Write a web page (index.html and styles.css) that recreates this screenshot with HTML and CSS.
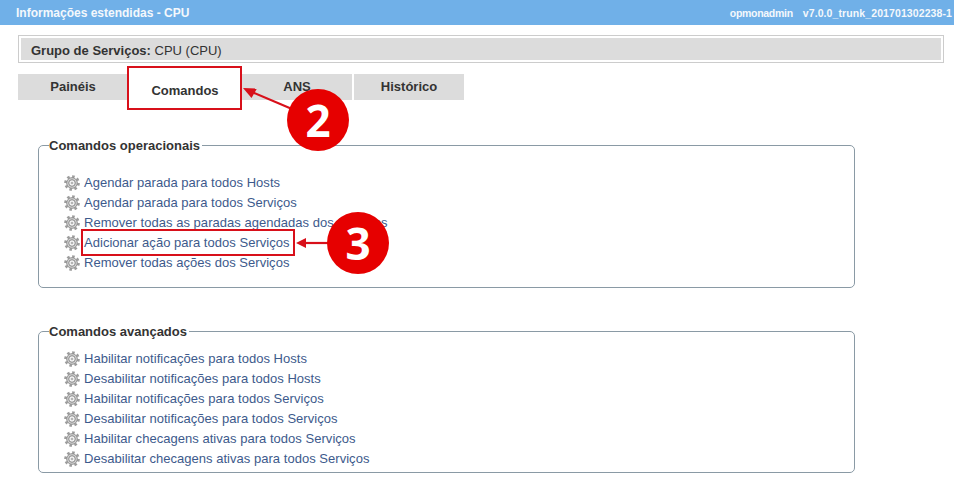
FILE: index.html
```html
<!DOCTYPE html>
<html lang="pt">
<head>
<meta charset="utf-8">
<title>Informações estendidas - CPU</title>
<link rel="stylesheet" href="styles.css">
</head>
<body>
<svg class="defs" width="0" height="0" aria-hidden="true">
  <symbol id="gear" viewBox="0 0 18 18">
    <circle cx="9" cy="9" r="7.4" fill="none" stroke="#9c9c9c" stroke-width="2.8" stroke-dasharray="2.9 2.9"/>
    <circle cx="9" cy="9" r="6" fill="#d2d2d2" stroke="#868686" stroke-width="1"/>
    <circle cx="9" cy="9" r="3.7" fill="#f4f4f4" stroke="#858585" stroke-width="1.1"/>
    <circle cx="9" cy="9" r="1.5" fill="#b4b4b4"/>
  </symbol>
</svg>
<header class="topbar">
  <span class="topbar-title">Informações estendidas - CPU</span>
  <span class="topbar-meta"><span class="topbar-user">opmonadmin</span><span class="topbar-version">v7.0.0_trunk_201701302238-1</span></span>
</header>
<main class="content">
  <div class="group-box"><div class="group-inner"><b>Grupo de Serviços:</b> CPU (CPU)</div></div>
  <nav class="tabs">
    <a class="tab">Painéis</a>
    <a class="tab tab-active">Comandos</a>
    <a class="tab">ANS</a>
    <a class="tab">Histórico</a>
  </nav>
  <fieldset class="panel panel-ops">
    <legend>Comandos operacionais</legend>
    <ul class="cmds">
      <li><svg class="gear"><use href="#gear"/></svg><a>Agendar parada para todos Hosts</a></li>
      <li><svg class="gear"><use href="#gear"/></svg><a>Agendar parada para todos Serviços</a></li>
      <li><svg class="gear"><use href="#gear"/></svg><a>Remover todas as paradas agendadas dos Serviços</a></li>
      <li><svg class="gear"><use href="#gear"/></svg><a>Adicionar ação para todos Serviços</a></li>
      <li><svg class="gear"><use href="#gear"/></svg><a>Remover todas ações dos Serviços</a></li>
    </ul>
  </fieldset>
  <fieldset class="panel panel-adv">
    <legend>Comandos avançados</legend>
    <ul class="cmds">
      <li><svg class="gear"><use href="#gear"/></svg><a>Habilitar notificações para todos Hosts</a></li>
      <li><svg class="gear"><use href="#gear"/></svg><a>Desabilitar notificações para todos Hosts</a></li>
      <li><svg class="gear"><use href="#gear"/></svg><a>Habilitar notificações para todos Serviços</a></li>
      <li><svg class="gear"><use href="#gear"/></svg><a>Desabilitar notificações para todos Serviços</a></li>
      <li><svg class="gear"><use href="#gear"/></svg><a>Habilitar checagens ativas para todos Serviços</a></li>
      <li><svg class="gear"><use href="#gear"/></svg><a>Desabilitar checagens ativas para todos Serviços</a></li>
    </ul>
  </fieldset>
</main>
<div class="mark mark-tab"></div>
<div class="mark mark-link"></div>
<svg class="arrows" width="954" height="480" aria-hidden="true">
  <path d="M292 109 L252 92" stroke="#d8101a" stroke-width="2.2" fill="none"/>
  <path d="M243 88 L257 88.5 L251.5 98 Z" fill="#d8101a"/>
  <path d="M332 243 L305 243" stroke="#d8101a" stroke-width="2.2" fill="none"/>
  <path d="M296 243 L306 238 L306 248 Z" fill="#d8101a"/>
</svg>
<div class="badge badge-2">2</div>
<div class="badge badge-3">3</div>
</body>
</html>
```
FILE: styles.css
```css
* { box-sizing: border-box; }
html, body { margin: 0; padding: 0; }
body {
  width: 954px;
  height: 480px;
  overflow: hidden;
  position: relative;
  background: #fff;
  font-family: "Liberation Sans", Arial, sans-serif;
  font-size: 12px;
  color: #333;
}
.defs { position: absolute; }
.topbar {
  height: 25px;
  background: #70b0e8;
  color: #f4f8fc;
  display: flex;
  justify-content: space-between;
  align-items: center;
  padding: 0 2px 0 16px;
}
.topbar-title { font-weight: bold; font-size: 12px; }
.topbar-meta { font-size: 10.5px; font-weight: bold; display: flex; gap: 10px; }
.topbar-user { letter-spacing: -0.3px; }
.topbar-version { letter-spacing: 0.1px; }
.content { padding: 10px 10px 0 18px; }
.group-box {
  height: 28px;
  border: 1px solid #ccc;
  padding: 2px;
}
.group-inner {
  height: 22px;
  line-height: 25px;
  background: #dcdcdc;
  padding-left: 10px;
  font-size: 13px;
  color: #333;
}
.tabs {
  display: flex;
  gap: 2px;
  margin-top: 11px;
}
.tab {
  width: 110px;
  height: 26px;
  line-height: 26px;
  background: #dcdcdc;
  text-align: center;
  font-weight: bold;
  font-size: 13px;
  color: #333;
}
.tab-active { background: #fff; line-height: 33px; }
.panel {
  width: 817px;
  margin: 0 0 0 20px;
  padding: 0 0 0 10px;
  border: 1px solid #8a9aa5;
  border-radius: 5px;
}
.panel-ops { height: 150px; margin-top: 38px; }
.panel-adv { height: 149px; margin-top: 36px; }
.panel legend {
  padding: 0 2px 0 0;
  font-size: 13px;
  font-weight: bold;
  color: #333;
  line-height: 15px;
}
.panel-ops .cmds { padding-top: 20px; }
.panel-adv .cmds { padding-top: 10px; }
.cmds { list-style: none; margin: 0 0 0 15px; padding: 0; }
.cmds li {
  height: 20px;
  display: flex;
  align-items: center;
  gap: 4px;
}
.gear { width: 16px; height: 16px; flex: none; }
.cmds a {
  color: #3d5a8c;
  font-size: 13px;
  line-height: 20px;
  letter-spacing: 0.03px;
  white-space: nowrap;
}
.mark {
  position: absolute;
  border: 2px solid #d8101a;
}
.mark-tab { left: 127px; top: 66px; width: 115px; height: 44px; }
.mark-link { left: 81px; top: 229px; width: 214px; height: 27px; }
.arrows { position: absolute; left: 0; top: 0; }
.badge {
  position: absolute;
  width: 62px;
  height: 62px;
  border-radius: 50%;
  background: #e60000;
  color: #fff;
  font-family: "Open Sans", sans-serif;
  font-weight: bold;
  font-size: 44px;
  line-height: 62px;
  text-align: center;
}
.badge-2 { left: 287px; top: 89px; }
.badge-3 { left: 327px; top: 212px; }
```
